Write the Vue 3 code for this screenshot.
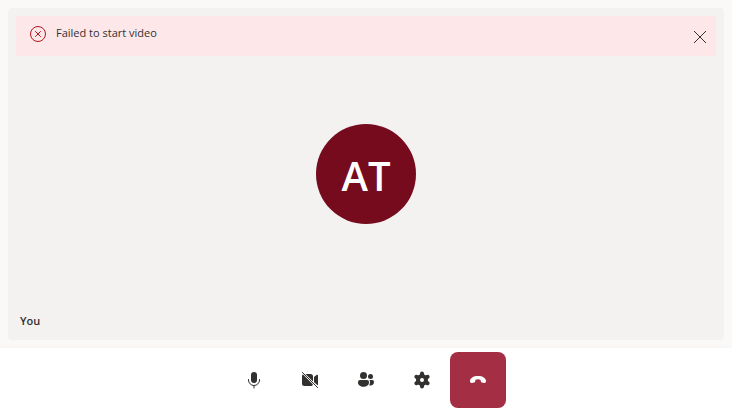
<script setup>
import { ref } from 'vue'

const displayName = 'You'
const initials = 'AT'
const errorVisible = ref(true)
</script>

<template>
  <div class="call">
    <main class="stage">
      <section class="tile" aria-label="Local video">
        <div v-if="errorVisible" class="alert" role="alert">
          <svg class="alert-icon" viewBox="0 0 16 16" aria-hidden="true">
            <circle cx="8" cy="8" r="7.5" />
            <path d="M5.2 5.2l5.6 5.6M10.8 5.2l-5.6 5.6" />
          </svg>
          <span class="alert-text">Failed to start video</span>
          <button class="dismiss" type="button" aria-label="Dismiss" @click="errorVisible = false">
            <svg viewBox="0 0 12 12" aria-hidden="true"><path d="M0 0l12 12M12 0L0 12" /></svg>
          </button>
        </div>
        <div class="avatar">{{ initials }}</div>
        <span class="name">{{ displayName }}</span>
      </section>
    </main>

    <footer class="controls">
      <button class="control" type="button" aria-label="Mute">
        <svg viewBox="0 0 20 20" aria-hidden="true">
          <rect x="7" y="2" width="6" height="11" rx="3" />
          <path class="line" d="M4.5 9.5v.5a5.5 5.5 0 0 0 11 0v-.5M10 15.5V18" />
        </svg>
      </button>
      <button class="control" type="button" aria-label="Turn on camera">
        <svg viewBox="0 0 20 20" aria-hidden="true">
          <path d="M2.9 4.3L13 14.4A2.5 2.5 0 0 1 10.5 16h-6A2.5 2.5 0 0 1 2 13.5v-7c0-.9.3-1.7.9-2.2zM5.4 4h5.1A2.5 2.5 0 0 1 13 6.5v5.1zM14 6.9l2.8-2.1c.5-.4 1.2 0 1.2.6v9.2c0 .4-.1.6-.3.7L14 12.2z" />
          <path class="line" d="M2.4 2.4l15.2 15.2" />
        </svg>
      </button>
      <button class="control" type="button" aria-label="People">
        <svg viewBox="0 0 20 20" aria-hidden="true">
          <circle cx="7.5" cy="5.5" r="3.5" />
          <circle cx="14.5" cy="6.5" r="2.5" />
          <path d="M4 10h7a2 2 0 0 1 2 2c0 3.3-2.3 4.700-5.500 4.700S2 15.300 2 12a2 2 0 0 1 2-2z" />
          <path d="M13.400 10h2.800a1.800 1.800 0 0 1 1.800 1.800c0 2.500-1.400 3.700-3.500 3.700-.5 0-.9-.1-1.300-.2.500-.9.800-2 .8-3.300 0-.8-.2-1.500-.6-2z" />
        </svg>
      </button>
      <button class="control" type="button" aria-label="Settings">
        <svg viewBox="0 0 20 20" aria-hidden="true">
          <circle class="hub" cx="10" cy="10" r="4" />
          <path class="teeth" d="M10 5V3.500M10 15v1.500M14.330 7.500l1.300-.75M5.670 12.500l-1.300.75M14.330 12.500l1.300.75M5.670 7.500l-1.300-.75" />
        </svg>
      </button>
      <button class="control leave" type="button" aria-label="Leave">
        <svg viewBox="0 0 20 20" aria-hidden="true">
          <path d="M10 6c4.700 0 8 2.100 8 5.100 0 1.500-.8 2.100-2 1.900l-1.800-.4c-.9-.2-1.300-.6-1.400-1.400l-.2-1.300C11.800 9.500 11 9.300 10 9.300s-1.800.2-2.600.6l-.2 1.300c-.1.800-.5 1.200-1.400 1.400L4 13c-1.200.2-2-.4-2-1.900C2 8.100 5.300 6 10 6z" />
        </svg>
      </button>
    </footer>
  </div>
</template>

<style>
body {
  margin: 0;
}
</style>

<style scoped>
.call {
  display: flex;
  flex-direction: column;
  min-height: 100vh;
  background: #faf9f8;
  color: #323130;
  font-family: "Segoe UI", "Open Sans", "Noto Sans", sans-serif;
}

.stage {
  display: flex;
  flex: 1;
  padding: 8px;
}

.tile {
  display: grid;
  flex: 1;
  grid-template-rows: 1fr auto 1fr;
  grid-template-columns: 1fr;
  padding: 8px;
  border-radius: 4px;
  background: #f3f2f1;
}

.alert {
  display: flex;
  grid-row: 1;
  align-self: start;
  box-sizing: border-box;
  height: 40px;
  padding-left: 14px;
  background: #fde7e9;
  font-size: 11px;
  line-height: 16px;
}

.alert-icon {
  width: 16px;
  height: 16px;
  margin-top: 10px;
  overflow: visible;
  fill: none;
  stroke: #b8141e;
}

.alert-text {
  flex: 1;
  padding: 9px 10px;
}

.dismiss {
  display: flex;
  align-items: center;
  justify-content: center;
  width: 32px;
  height: 40px;
  padding: 2px 0 0;
  border: 0;
  background: none;
  cursor: pointer;
}

.dismiss svg {
  width: 12px;
  height: 12px;
  fill: none;
  stroke: #323130;
}

.avatar {
  display: flex;
  grid-row: 2;
  align-items: center;
  justify-content: center;
  justify-self: center;
  box-sizing: border-box;
  width: 100px;
  height: 100px;
  padding-top: 4px;
  border-radius: 50%;
  background: #750b1c;
  color: #fff;
  font-size: 40px;
  font-weight: 600;
  line-height: 48px;
}

.name {
  grid-row: 3;
  align-self: end;
  padding: 0 4px 3px;
  font-size: 11px;
  font-weight: 600;
  line-height: 16px;
}

.controls {
  display: flex;
  justify-content: center;
  padding: 4px;
  background: #fff;
  box-shadow: 0 0 4px rgba(0, 0, 0, 0.04);
}

.control {
  display: flex;
  align-items: center;
  justify-content: center;
  width: 56px;
  height: 56px;
  padding: 0;
  border: 0;
  border-radius: 8px;
  background: none;
  color: #323130;
  cursor: pointer;
}

.control svg {
  width: 20px;
  height: 20px;
  fill: currentColor;
}

.control .line {
  fill: none;
  stroke: currentColor;
  stroke-linecap: round;
}

.control .hub,
.control .teeth {
  fill: none;
  stroke: currentColor;
  stroke-width: 4;
  stroke-linecap: round;
}

.leave {
  background: #a42e43;
  color: #fff;
}
</style>
